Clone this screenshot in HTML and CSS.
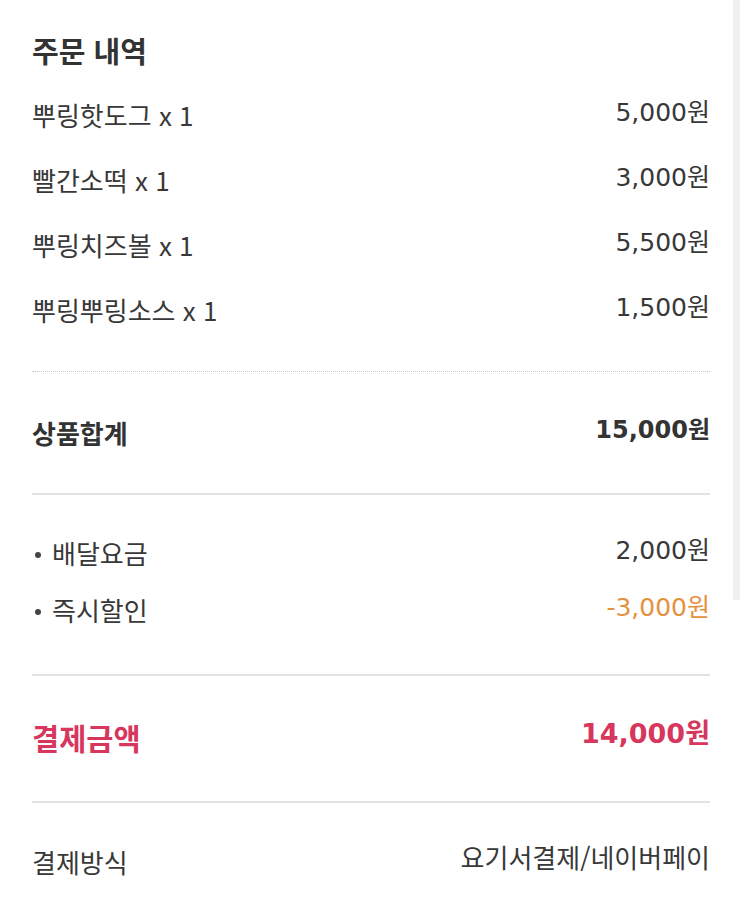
FILE: index.html
```html
<!DOCTYPE html>
<html lang="ko">
<head>
  <meta charset="UTF-8">
  <meta name="viewport" content="width=device-width, initial-scale=1.0">
  <title>주문 내역</title>
  <link rel="stylesheet" href="styles.css">
</head>
<body>
  <main class="receipt">
    <h2 class="title">주문 내역</h2>
    <ul class="items">
      <li class="row"><span>뿌링핫도그 x 1</span><span class="price">5,000원</span></li>
      <li class="row"><span>빨간소떡 x 1</span><span class="price">3,000원</span></li>
      <li class="row"><span>뿌링치즈볼 x 1</span><span class="price">5,500원</span></li>
      <li class="row"><span>뿌링뿌링소스 x 1</span><span class="price">1,500원</span></li>
    </ul>
    <div class="block subtotal dotted">
      <div class="row strong"><span>상품합계</span><span class="price">15,000원</span></div>
    </div>
    <ul class="block fees">
      <li class="row"><span class="label"><i class="dot"></i>배달요금</span><span class="price">2,000원</span></li>
      <li class="row"><span class="label"><i class="dot"></i>즉시할인</span><span class="price discount">-3,000원</span></li>
    </ul>
    <div class="block pay">
      <div class="row strong accent"><span>결제금액</span><span class="price">14,000원</span></div>
    </div>
    <div class="block method">
      <div class="row"><span>결제방식</span><span class="price text">요기서결제/네이버페이</span></div>
    </div>
  </main>
  <div class="scroll-track"></div>
</body>
</html>
```

FILE: styles.css
```css
* { box-sizing: border-box; margin: 0; padding: 0; }
body { font-family: "Noto Sans CJK KR", "Noto Sans", sans-serif; background: #fff; color: #383838; }
ul { list-style: none; }

.receipt { padding: 30px 33px 0 32px; }
.title { font-size: 29px; line-height: 40px; font-weight: 600; color: #333; margin-bottom: 12px; }

.row { display: flex; justify-content: space-between; align-items: center; height: 65px; font-size: 26px; }
.row .price { margin-bottom: 10px; font-family: "DejaVu Sans", "Noto Sans CJK KR", sans-serif; font-size: 25px; }
.row .price.text { font-family: "Noto Sans CJK KR", sans-serif; font-size: 26px; }
.strong { font-weight: 700; color: #333; }
.strong .price { font-size: 24px; }
.accent { color: #d7365d; font-size: 29.5px; }
.accent .price { font-size: 27px; }

.items { padding-bottom: 29px; }
.block { border-top: 2px solid #e3e3e3; }
.block.dotted { border-top: 1px dotted #c8c8c8; }

.subtotal { padding: 28px 0; }
.fees { padding: 29px 0 36px; }
.fees .row { height: 57px; }
.label { display: flex; align-items: center; }
.dot { width: 6px; height: 6px; border-radius: 50%; background: #444; margin: 4px 11px 0 3px; }
.discount { color: #e4913f; }
.pay { padding: 28px 0 32px; }
.method { padding-top: 26px; }

.scroll-track { position: fixed; top: 0; right: 3px; width: 7px; height: 600px; background: #f0f0f0; }
```
